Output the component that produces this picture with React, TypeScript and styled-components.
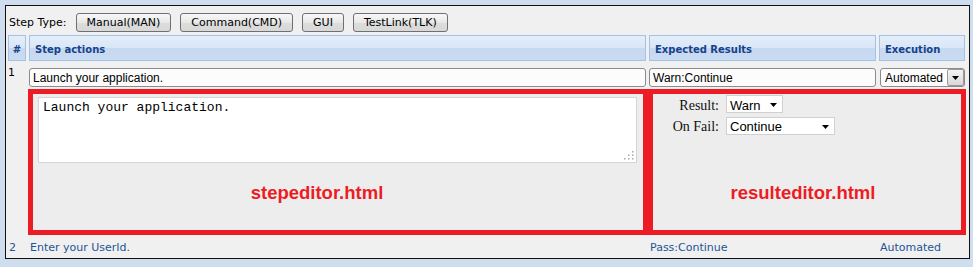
import styled, { createGlobalStyle } from 'styled-components';

const GlobalStyle = createGlobalStyle`
  html, body {
    margin: 0;
    padding: 0;
    background-color: #cfdeef;
  }
  body {
    font-family: "DejaVu Sans", Verdana, sans-serif;
    font-size: 11px;
    color: #000;
  }
`;

const COLUMNS = '18px 617px 227px 86px';

const stepTypes = ['Manual(MAN)', 'Command(CMD)', 'GUI', 'TestLink(TLK)'];

const Caret = ({ width = 7, height = 4 }: { width?: number; height?: number }) => (
  <svg width={width} height={height} viewBox={`0 0 ${width} ${height}`}>
    <polygon points={`0,0 ${width},0 ${width / 2},${height}`} fill="#000" />
  </svg>
);

const Grip = () => (
  <ScGrip width="12" height="10" viewBox="0 0 12 10">
    <rect x="9" y="1" width="1.5" height="1.5" fill="#a8a8a8" />
    <rect x="5" y="4.5" width="1.5" height="1.5" fill="#a8a8a8" />
    <rect x="9" y="4.5" width="1.5" height="1.5" fill="#a8a8a8" />
    <rect x="1" y="8" width="1.5" height="1.5" fill="#a8a8a8" />
    <rect x="5" y="8" width="1.5" height="1.5" fill="#a8a8a8" />
    <rect x="9" y="8" width="1.5" height="1.5" fill="#a8a8a8" />
  </ScGrip>
);

export default function App() {
  return (
    <>
      <GlobalStyle />
      <ScPanel>
        <ScToolbar>
          <ScToolLabel>Step Type:</ScToolLabel>
          {stepTypes.map(t => (
            <ScTypeButton key={t}>{t}</ScTypeButton>
          ))}
        </ScToolbar>

        <ScHeaderRow>
          <ScHeadCell $center>#</ScHeadCell>
          <ScHeadCell>Step actions</ScHeadCell>
          <ScHeadCell>Expected Results</ScHeadCell>
          <ScHeadCell>Execution</ScHeadCell>
        </ScHeaderRow>

        <ScEditRow>
          <ScIndex>1</ScIndex>
          <ScTextInput readOnly value="Launch your application." />
          <ScTextInput readOnly value="Warn:Continue" />
          <ScExecSelect>
            <span>Automated</span>
            <ScDropButton>
              <Caret width={7} height={4} />
            </ScDropButton>
          </ScExecSelect>
        </ScEditRow>

        <ScEditorRow>
          <ScEditors>
            <ScEditorBox $width={620}>
              <ScStepArea>
                <ScTextarea readOnly defaultValue="Launch your application." />
                <Grip />
              </ScStepArea>
              <ScEditorName $shift={42}>stepeditor.html</ScEditorName>
            </ScEditorBox>
            <ScEditorBox $width={318}>
              <ScResultForm>
                <ScFieldLabel>Result:</ScFieldLabel>
                <ScFakeSelect $width={57}>
                  <span>Warn</span>
                  <Caret />
                </ScFakeSelect>
                <ScFieldLabel>On Fail:</ScFieldLabel>
                <ScFakeSelect $width={109}>
                  <span>Continue</span>
                  <Caret />
                </ScFakeSelect>
              </ScResultForm>
              <ScEditorName $shift={8}>resulteditor.html</ScEditorName>
            </ScEditorBox>
          </ScEditors>
        </ScEditorRow>

        <ScPlainRow>
          <span>2</span>
          <ScPlainCell>Enter your UserId.</ScPlainCell>
          <ScPlainCell>Pass:Continue</ScPlainCell>
          <ScPlainCell>Automated</ScPlainCell>
        </ScPlainRow>
      </ScPanel>
    </>
  );
}

const ScPanel = styled.div`
  box-sizing: border-box;
  width: 965px;
  height: 254px;
  margin: 5px 0 0 5px;
  border: 1px solid #111;
  background-color: #f0f0f0;
  display: flex;
  flex-direction: column;
`;

const ScToolbar = styled.div`
  display: flex;
  align-items: center;
  gap: 9px;
  padding: 7px 0 0 3px;
  height: 19px;
`;

const ScToolLabel = styled.span`
  white-space: nowrap;
`;

const ScTypeButton = styled.button`
  font: inherit;
  height: 19px;
  margin: 0;
  padding: 0 10px;
  border: 1px solid #707070;
  border-radius: 3px;
  background: linear-gradient(#f8f8f8, #e8e8e8 50%, #dcdcdc 51%, #d8d8d8);
  color: #000;
  line-height: 17px;
  white-space: nowrap;
  cursor: pointer;
`;

const ScRow = styled.div`
  display: grid;
  grid-template-columns: ${COLUMNS};
  column-gap: 3px;
  padding-left: 2px;
`;

const ScHeaderRow = styled(ScRow)`
  margin-top: 3px;
  height: 26px;
`;

const ScHeadCell = styled.div<{ $center?: boolean }>`
  box-sizing: border-box;
  display: flex;
  align-items: center;
  justify-content: ${p => (p.$center ? 'center' : 'flex-start')};
  padding: 2px 0 0 ${p => (p.$center ? 0 : 5)}px;
  border: 1px solid #a3c2e9;
  background: linear-gradient(#e4eefa, #d9e6f6 50%, #c6d9f0 51%, #c9dbf1);
  color: #15428b;
  font-weight: bold;
  font-size: 10px;
  white-space: nowrap;
`;

const ScEditRow = styled(ScRow)`
  margin-top: 3px;
  height: 25px;
`;

const ScIndex = styled.span`
  padding-top: 2px;
  line-height: 13px;
`;

const ScTextInput = styled.input`
  box-sizing: border-box;
  width: 100%;
  height: 19px;
  margin: 4px 0 0;
  padding: 1px 3px 0;
  border: 1px solid #8b8b8b;
  border-radius: 3px;
  background-color: #fcfcfc;
  font-family: "Liberation Sans", Arial, sans-serif;
  font-size: 12px;
  color: #000;
  outline: none;
`;

const ScExecSelect = styled.div`
  box-sizing: border-box;
  display: flex;
  align-items: center;
  justify-content: space-between;
  height: 19px;
  margin: 4px 0 0 1px;
  padding-left: 4px;
  border: 1px solid #8b8b8b;
  border-radius: 3px;
  background-color: #fcfcfc;
  font-family: "Liberation Sans", Arial, sans-serif;
  font-size: 12px;
`;

const ScDropButton = styled.div`
  box-sizing: border-box;
  display: flex;
  align-items: center;
  justify-content: center;
  width: 17px;
  height: 17px;
  border: 1px solid #9a9a9a;
  border-radius: 2px;
  background: linear-gradient(#f4f4f4, #d8d8d8);
`;

const ScEditorRow = styled(ScRow)``;

const ScEditors = styled.div`
  grid-column: 2 / 5;
  display: flex;
  margin: 0 -1px;
`;

const ScEditorBox = styled.div<{ $width: number }>`
  box-sizing: border-box;
  display: flex;
  flex-direction: column;
  width: ${p => p.$width}px;
  height: 146px;
  padding-bottom: 27px;
  border: 5px solid #ed1c24;
  background-color: #ededed;
`;

const ScStepArea = styled.div`
  position: relative;
  height: 66px;
  margin: 3px 6px 0 5px;
`;

const ScTextarea = styled.textarea`
  box-sizing: border-box;
  display: block;
  width: 100%;
  height: 100%;
  margin: 0;
  padding: 2px 4px;
  border: 1px solid #d2d6dc;
  background-color: #fff;
  font-family: "Liberation Mono", "Courier New", monospace;
  font-size: 13px;
  color: #000;
  resize: none;
  outline: none;
`;

const ScGrip = styled.svg`
  position: absolute;
  right: 2px;
  bottom: 3px;
`;

const ScEditorName = styled.div<{ $shift: number }>`
  margin-top: auto;
  padding-right: ${p => p.$shift}px;
  text-align: center;
  font-family: "Liberation Sans", Arial, sans-serif;
  font-weight: bold;
  font-size: 18.5px;
  line-height: 21px;
  color: #ed1c24;
`;

const ScResultForm = styled.div`
  display: grid;
  grid-template-columns: 66px auto;
  justify-content: start;
  align-items: baseline;
  column-gap: 7px;
  row-gap: 3px;
  padding-top: 1px;
`;

const ScFieldLabel = styled.span`
  justify-self: end;
  font-family: "Liberation Serif", "Times New Roman", serif;
  font-size: 14px;
  color: #111;
`;

const ScFakeSelect = styled.div<{ $width: number }>`
  box-sizing: border-box;
  display: flex;
  align-items: center;
  justify-content: space-between;
  width: ${p => p.$width}px;
  height: 18px;
  padding: 2px 5px 0 3px;
  border: 1px solid #d0d0d0;
  background-color: #fff;
  font-family: "Liberation Sans", Arial, sans-serif;
  font-size: 13px;
  color: #000;
`;

const ScPlainRow = styled(ScRow)`
  padding-top: 6px;
  line-height: 13px;
  color: #1d5595;
  & > span:first-child {
    padding-left: 1px;
  }
`;

const ScPlainCell = styled.span`
  padding-left: 1px;
  white-space: nowrap;
`;
